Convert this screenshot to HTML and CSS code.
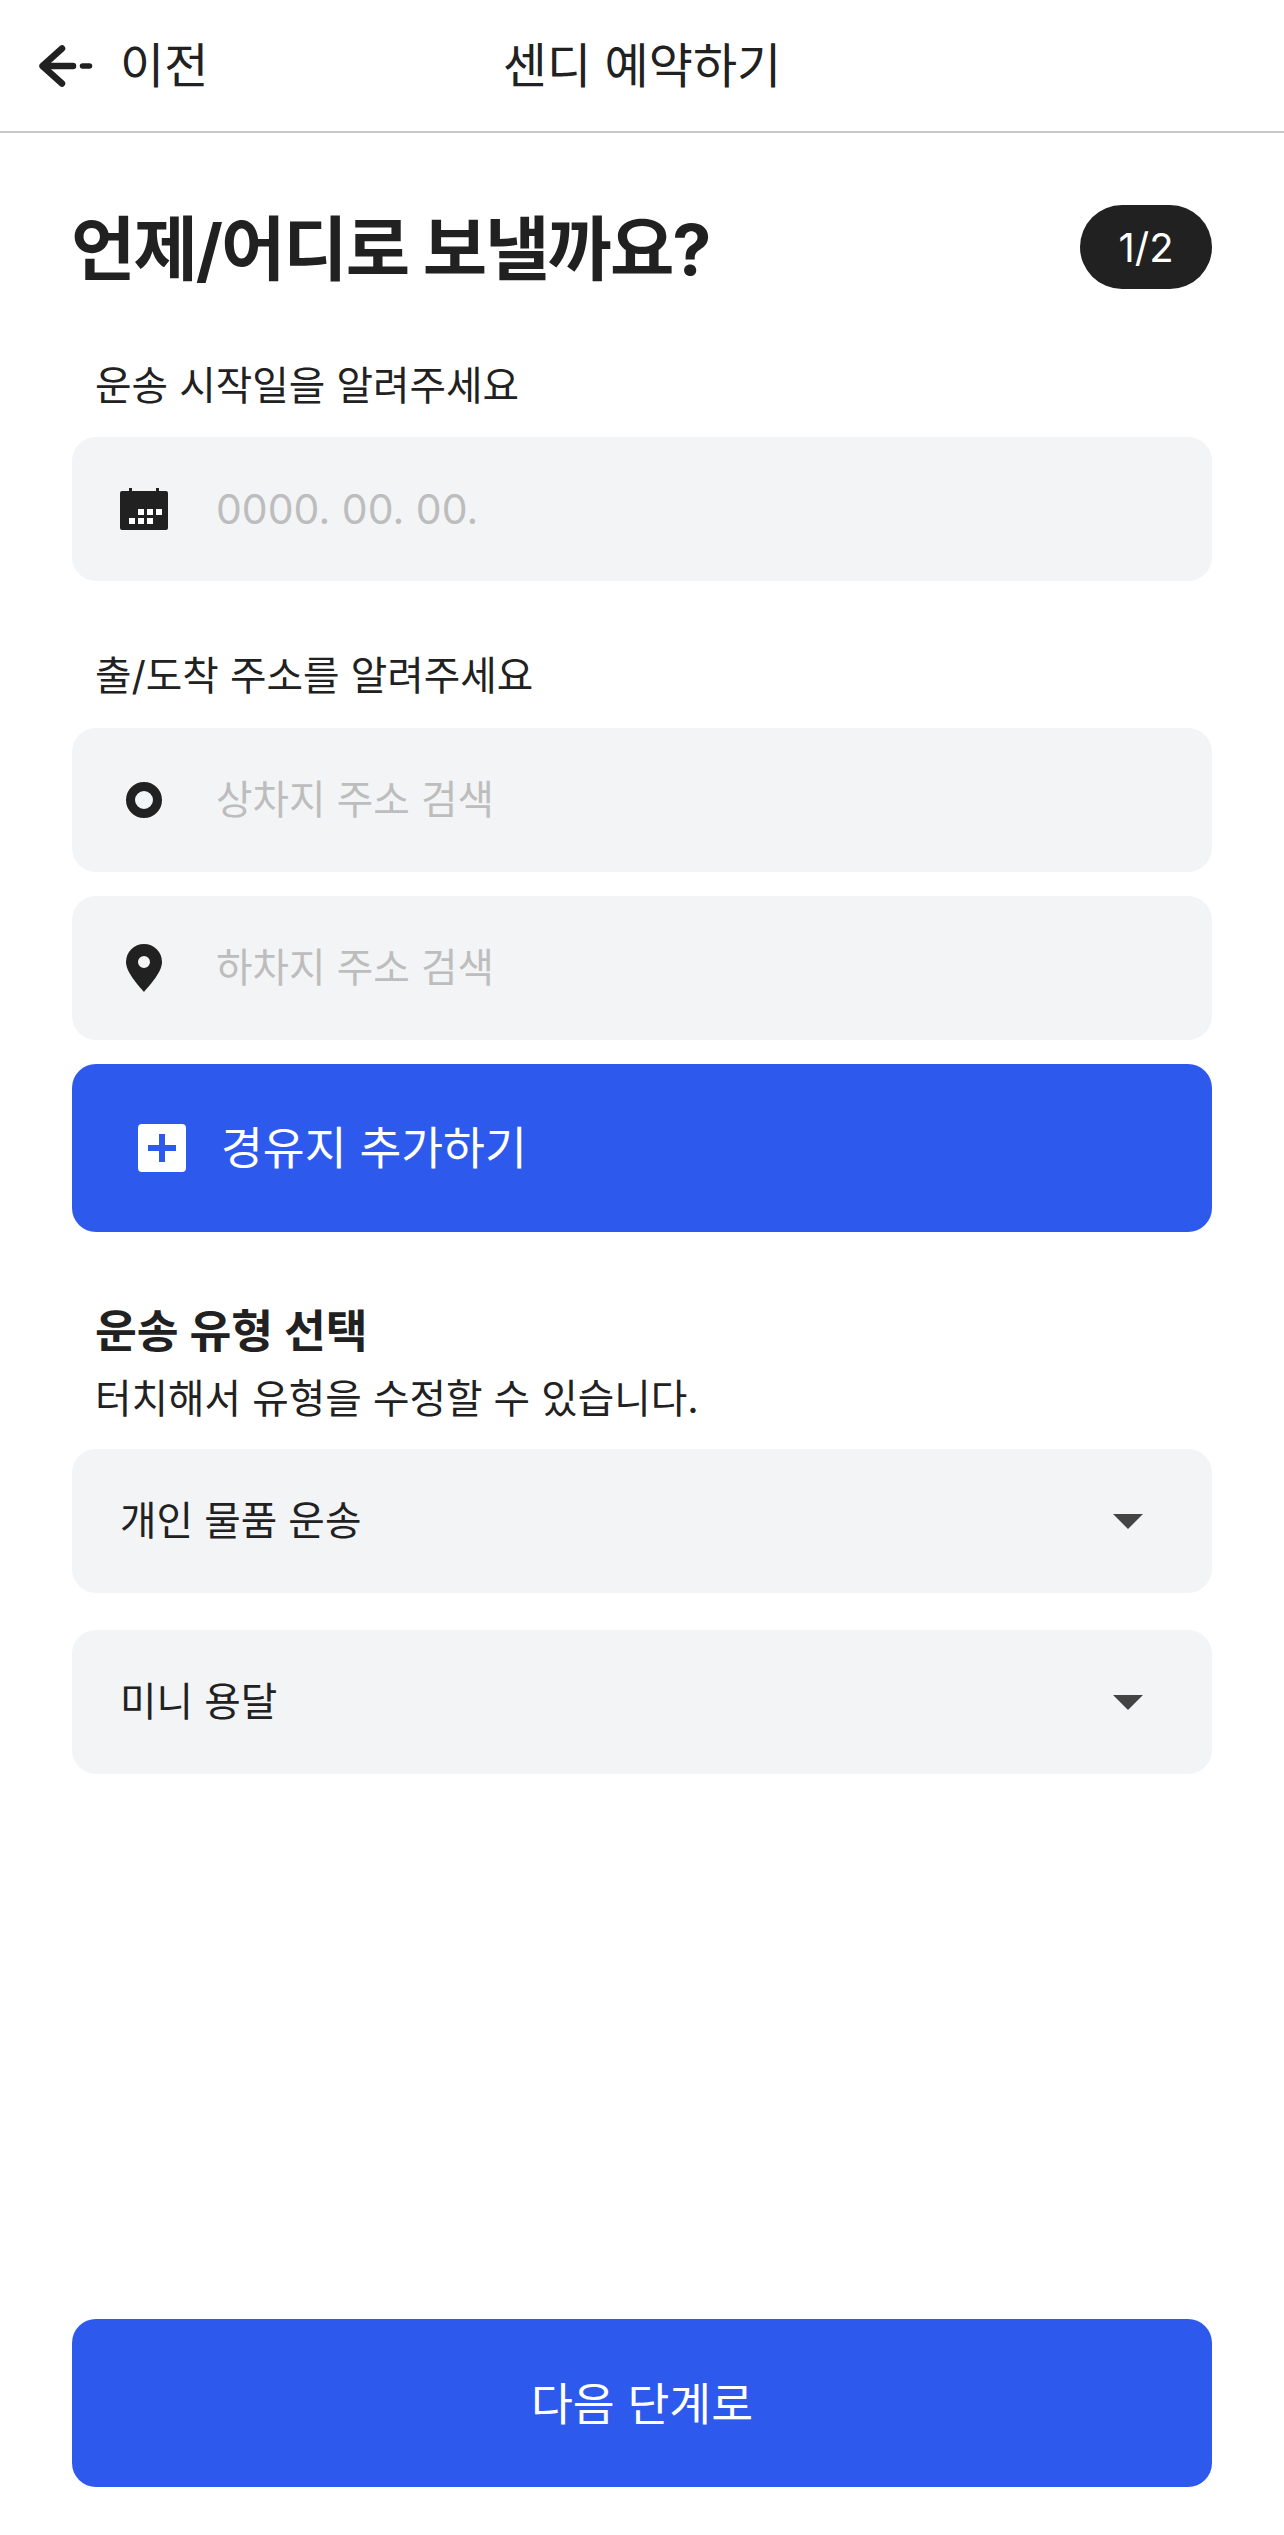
FILE: index.html
```html
<!DOCTYPE html>
<html lang="ko">
<head>
    <meta charset="UTF-8">
    <meta name="viewport" content="width=device-width, initial-scale=1.0">
    <title>센디 예약하기</title>
    <link rel="stylesheet" href="styles.css">
</head>
<body>

<div class="page">
    <header class="top-bar">
        <div class="back">
            <svg viewBox="0 0 60 44" width="60" height="44"><path d="M26 4.500 L6.500 22 L26 39.500" fill="none" stroke="#212121" stroke-width="6.500" stroke-linecap="round" stroke-linejoin="round"/><path d="M8 22 H37" stroke="#212121" stroke-width="6.500" stroke-linecap="round"/><path d="M46.500 22 H53.500" stroke="#212121" stroke-width="5.500" stroke-linecap="round"/></svg>
            <span>이전</span>
        </div>
        <div class="top-title">센디 예약하기</div>
    </header>

    <main class="content">
        <div class="heading-row">
            <h1>언제/어디로 보낼까요?</h1>
            <span class="step">1/2</span>
        </div>

        <p class="label">운송 시작일을 알려주세요</p>
        <div class="field">
            <svg viewBox="0 0 48 48" width="48" height="48"><path fill="#212121" d="M9 3h3v3h24V3h3v3h7a2 2 0 0 1 2 2v35a2 2 0 0 1-2 2H2a2 2 0 0 1-2-2V8a2 2 0 0 1 2-2h7z"/><g fill="#fff"><rect x="18" y="24" width="6" height="6"/><rect x="27" y="24" width="6" height="6"/><rect x="36" y="24" width="6" height="6"/><rect x="9" y="33" width="6" height="6"/><rect x="18" y="33" width="6" height="6"/><rect x="27" y="33" width="6" height="6"/></g></svg>
            <span class="placeholder date">0000. 00. 00.</span>
        </div>

        <p class="label label-address">출/도착 주소를 알려주세요</p>
        <div class="field">
            <svg viewBox="0 0 48 48" width="48" height="48"><circle cx="24" cy="24" r="13.500" fill="none" stroke="#212121" stroke-width="9"/></svg>
            <span class="placeholder">상차지 주소 검색</span>
        </div>
        <div class="field field-gap">
            <svg viewBox="0 0 48 48" width="48" height="48"><path fill="#212121" fill-rule="evenodd" d="M24 0A18 18 0 0 0 6 18c0 10 12 23 18 30 6-7 18-20 18-30A18 18 0 0 0 24 0zm0 24a6 6 0 1 1 0-12 6 6 0 0 1 0 12z"/></svg>
            <span class="placeholder">하차지 주소 검색</span>
        </div>
        <button class="blue-btn add-stop">
            <svg viewBox="0 0 48 48" width="48" height="48"><rect width="48" height="48" rx="4" fill="#fff"/><path d="M24 10v28M10 24h28" stroke="#2e59ed" stroke-width="6"/></svg>
            <span>경유지 추가하기</span>
        </button>

        <h2>운송 유형 선택</h2>
        <p class="sub">터치해서 유형을 수정할 수 있습니다.</p>
        <div class="field select">
            <span class="select-text">개인 물품 운송</span>
            <span class="caret"></span>
        </div>
        <div class="field select select-second">
            <span class="select-text">미니 용달</span>
            <span class="caret"></span>
        </div>

        <button class="blue-btn next">다음 단계로</button>
    </main>
</div>

</body>
</html>
```

FILE: styles.css
```css
* {
    margin: 0;
    padding: 0;
    box-sizing: border-box;
    font-family: 'Inter', 'Noto Sans CJK KR', sans-serif;
}

body {
    background-color: #fff;
    color: #212121;
}

.page {
    width: 1284px;
    height: 2535px;
    display: flex;
    flex-direction: column;
}

.top-bar {
    height: 133px;
    flex-shrink: 0;
    border-bottom: 2px solid #c8c8c8;
    display: grid;
    grid-template-columns: 1fr auto 1fr;
    align-items: center;
    padding-left: 36px;
    padding-right: 36px;
}

.back {
    display: flex;
    align-items: center;
    gap: 24px;
}

.back span,
.top-title {
    font-size: 48px;
    margin-bottom: 8px;
}

.content {
    flex: 1;
    display: flex;
    flex-direction: column;
    padding: 0 72px 48px;
}

.heading-row {
    display: flex;
    justify-content: space-between;
    align-items: center;
    margin-top: 72px;
    height: 84px;
}

h1 {
    font-size: 70px;
    font-weight: 700;
    letter-spacing: -2px;
    margin-bottom: 6px;
    margin-left: -1px;
}

.step {
    width: 132px;
    height: 84px;
    border-radius: 42px;
    background-color: #212121;
    color: #fff;
    font-size: 40px;
    display: flex;
    align-items: center;
    justify-content: center;
}

.label {
    font-size: 39.700px;
    line-height: 60px;
    padding-left: 23px;
    margin-top: 67px;
    margin-bottom: 21px;
}

.label-address {
    margin-top: 65px;
    margin-bottom: 22px;
}

.field {
    height: 144px;
    border-radius: 24px;
    background-color: #f3f4f6;
    display: flex;
    align-items: center;
    padding-left: 48px;
    gap: 48px;
    flex-shrink: 0;
}

.field-gap {
    margin-top: 24px;
}

.placeholder {
    font-size: 39.700px;
    color: #bdbdbd;
    margin-bottom: 7px;
}

.date {
    font-size: 41px;
    margin-bottom: 0;
}

.blue-btn {
    border: none;
    border-radius: 24px;
    background-color: #2e59ed;
    color: #fff;
    font-size: 45.500px;
    height: 168px;
    flex-shrink: 0;
}

.add-stop {
    margin-top: 24px;
    display: flex;
    align-items: center;
    gap: 35px;
    padding-left: 66px;
}

.add-stop span {
    margin-bottom: 7px;
}

h2 {
    font-size: 45.500px;
    font-weight: 700;
    padding-left: 23px;
    margin-top: 67px;
    line-height: 66px;
}

.sub {
    font-size: 39.700px;
    padding-left: 23px;
    line-height: 60px;
    margin-top: 4px;
    margin-bottom: 20px;
}

.select {
    justify-content: space-between;
    padding-right: 69px;
    font-size: 39.700px;
}

.select-text {
    margin-bottom: 7px;
}

.select-second {
    margin-top: 37px;
}

.caret {
    width: 0;
    height: 0;
    border-left: 15px solid transparent;
    border-right: 15px solid transparent;
    border-top: 15px solid #444;
}

.next {
    margin-top: auto;
    padding-bottom: 5px;
}
```
